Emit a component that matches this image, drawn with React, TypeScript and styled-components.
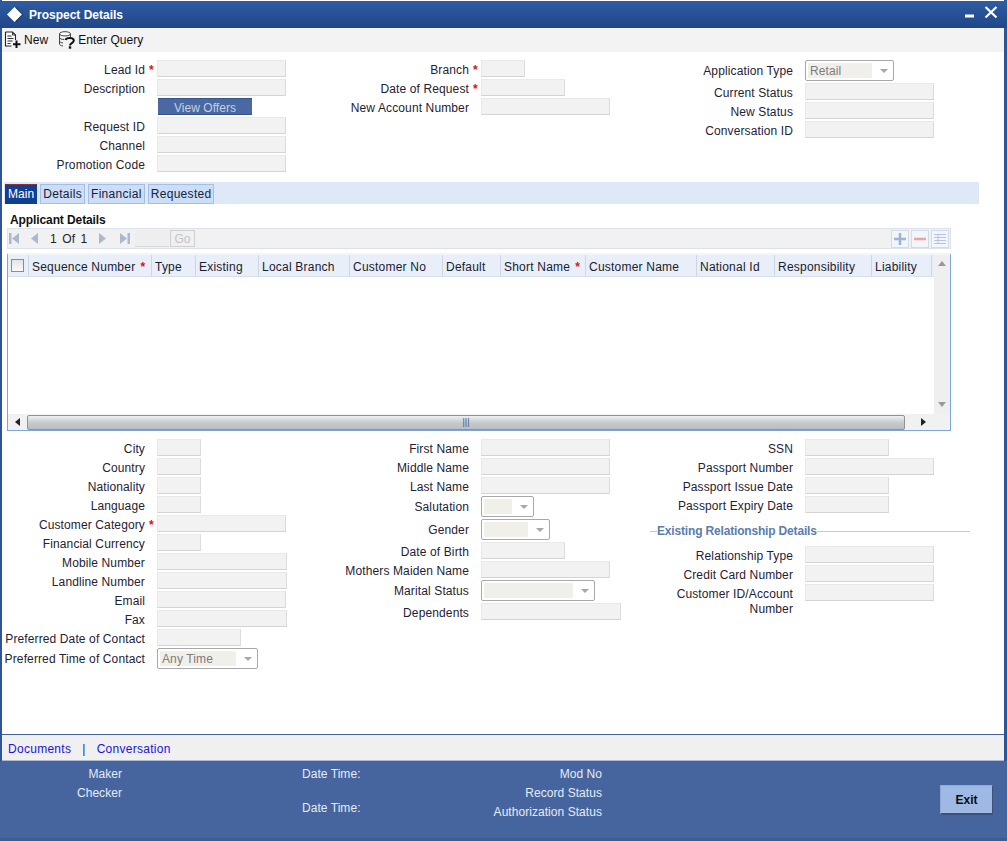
import styled, { createGlobalStyle } from "styled-components";

const Global = createGlobalStyle`
html, body {
    margin:0;
    padding:0;
    background:#fff;
}
body {
    font-family:"Liberation Sans", Arial, sans-serif;
    font-size:12px;
    letter-spacing:0.12px;
    color:#1f2233;
}
`

const Shell = styled.div`
width:1007px;
height:841px;
box-sizing:border-box;
display:flex;
flex-direction:column;
border-left:2px solid #2f5597;
border-right:3px solid #2f5597;
`

const TitleBar = styled.div`
height:27px;
flex:none;
margin:1px -3px 0 -2px;
padding:0 9px 0 7px;
display:flex;
align-items:center;
gap:6px;
color:#fff;
font-weight:bold;
letter-spacing:0;
background:linear-gradient(#2f5ca3, #1f4688);
`

const TitleText = styled.span`
flex:1;
`

const Toolbar = styled.div`
height:24px;
flex:none;
display:flex;
align-items:center;
padding-left:2px;
letter-spacing:0.05px;
background:#f3f3f3;
`

const ToolButton = styled.span`
display:flex;
align-items:center;
gap:3px;
margin-right:10px;
color:#111;
`

const Body = styled.div`
flex:1;
min-height:0;
display:flex;
flex-direction:column;
background:#fff;
`

const FormGrid = styled.div<{$top:number}>`
display:grid;
grid-template-columns:324px 324px 1fr;
padding-top:${(p) => p.$top}px;
`

const Column = styled.div`
display:flex;
flex-direction:column;
`

const Row = styled.div<{$tall?:boolean}>`
display:flex;
align-items:flex-start;
min-height:${(p) => (p.$tall ? 23 : 19)}px;
`

const Label = styled.div<{$tall?:boolean}>`
width:143px;
height:${(p) => (p.$tall ? 23 : 19)}px;
flex:none;
text-align:right;
line-height:${(p) => (p.$tall ? 23 : 21)}px;
white-space:nowrap;
`

const WrapLabel = styled(Label)`
height:auto;
white-space:normal;
line-height:15px;
padding-top:3px;
`

const StarSlot = styled.div`
width:12px;
height:19px;
flex:none;
padding-left:4px;
box-sizing:border-box;
line-height:21px;
color:#e01010;
font-weight:bold;
`

const Field = styled.div<{$w:number}>`
width:${(p) => p.$w}px;
height:17px;
box-sizing:border-box;
background:#f2f2f2;
border:1px solid #e9e9e9;
border-right-color:#dcdcdc;
border-bottom-color:#d4d4d4;
`

const SelectBox = styled.div<{$w:number}>`
width:${(p) => p.$w}px;
height:21px;
box-sizing:border-box;
display:flex;
align-items:center;
padding:0 5px 0 2px;
background:#fff;
border:1px solid #a9a9a9;
border-radius:2px;
`

const SelectValue = styled.div`
flex:1;
height:15px;
margin-right:8px;
padding-left:2px;
line-height:16px;
color:#7c7c7c;
background:#f1efea;
`

const Caret = styled.span`
width:0;
height:0;
border-left:4px solid transparent;
border-right:4px solid transparent;
border-top:4px solid #a8a8a8;
`

const OfferButton = styled.button`
display:block;
width:94px;
height:17px;
margin-left:1px;
padding:4px 0 0;
border:none;
border-top:1px solid #36558f;
border-bottom:1px solid #36558f;
background:#4a69a3;
color:#c6d0e0;
font:12px "Liberation Sans", Arial, sans-serif;
line-height:11px;
letter-spacing:0.05px;
`

const TabStrip = styled.div`
height:22px;
width:975px;
margin:8px 0 0 2px;
padding:2px 0 0 1px;
box-sizing:border-box;
display:flex;
gap:3px;
background:#dfe8f6;
`

const Tab = styled.div<{$active?:boolean}>`
padding:0 2px;
line-height:18px;
height:20px;
box-sizing:border-box;
letter-spacing:${(p) => (p.$active ? 0.05 : 0.3)}px;
border:1px solid ${(p) => (p.$active ? "#0f3f93" : "#a3c0e4")};
border-top-color:${(p) => (p.$active ? "#8a2f3a" : "#a3c0e4")};
background:${(p) => (p.$active ? "#0f3f93" : "#cbdef6")};
color:${(p) => (p.$active ? "#fff" : "#16213f")};
`

const SectionTitle = styled.div`
margin:9px 0 0 8px;
height:15px;
line-height:15px;
font-weight:bold;
letter-spacing:-0.1px;
color:#111;
`

const Pager = styled.div`
width:944px;
height:21px;
margin-left:5px;
box-sizing:border-box;
flex:none;
display:flex;
align-items:center;
padding:0 1px 0 1px;
background:#f1f1f1;
border:1px solid #dbe2ec;
`

const PagerIcon = styled.svg<{$gap:number}>`
display:block;
flex:none;
margin-right:${(p) => p.$gap}px;
`

const PagerText = styled.span`
width:38px;
margin:0 9px 0 10px;
padding-top:1px;
white-space:nowrap;
word-spacing:2px;
color:#222;
`

const PagerInput = styled.div`
width:34px;
height:16px;
margin:0 1px 0 5px;
background:#eeeeee;
border-bottom:1px solid #d6d6d6;
`

const GoButton = styled.div`
width:25px;
height:17px;
margin-right:auto;
box-sizing:border-box;
text-align:center;
line-height:16px;
color:#c4c4c4;
border:1px solid #cfcfcf;
background:#f0f0f0;
`

const SquareButton = styled.div`
width:18px;
height:18px;
margin-left:2px;
box-sizing:border-box;
display:flex;
align-items:center;
justify-content:center;
background:#f2f5fa;
border:1px solid #d3dbe8;
`

const TablePanel = styled.div`
width:944px;
height:178px;
margin:4px 0 0 5px;
box-sizing:border-box;
flex:none;
display:grid;
grid-template-columns:1fr 16px;
grid-template-rows:1fr 16px;
border:1px solid #7da6dc;
border-top:2px solid #f2f5fa;
`

const TableArea = styled.div`
overflow:hidden;
background:#fff;
`

const HeadRow = styled.div`
display:flex;
height:22px;
background:#e8eff9;
border-bottom:1px solid #d6e0ee;
box-sizing:border-box;
`

const HeadCell = styled.div<{$w:number}>`
width:${(p) => p.$w}px;
flex:none;
box-sizing:border-box;
padding-left:3px;
line-height:24px;
white-space:nowrap;
letter-spacing:0.22px;
border-right:1px solid #ccd7e6;
color:#1b1b2e;
`

const CheckCell = styled(HeadCell)`
padding-left:3px;
display:flex;
align-items:center;
`

const CheckBox = styled.span`
width:13px;
height:13px;
box-sizing:border-box;
background:linear-gradient(#e4e4e4, #fafafa);
border:1px solid #8d8d8d;
`

const Star = styled.span`
color:#e01010;
font-weight:bold;
margin-left:5px;
`

const VScroll = styled.div`
display:flex;
flex-direction:column;
justify-content:space-between;
align-items:center;
padding:6px 0 7px;
background:#efefef;
`

const HScroll = styled.div`
display:flex;
align-items:center;
background:#f1f1f1;
`

const ScrollEnd = styled.div<{$w:number, $pad?:number}>`
width:${(p) => p.$w}px;
flex:none;
box-sizing:border-box;
padding-left:${(p) => p.$pad || 0}px;
display:flex;
justify-content:center;
`

const ScrollThumb = styled.div`
flex:1;
height:15px;
box-sizing:border-box;
display:flex;
align-items:center;
justify-content:center;
border:1px solid #8f9396;
border-radius:2px;
background:linear-gradient(#eef0f1, #c3c8cb 55%, #b9bec1);
`

const Grip = styled.span`
font-size:9px;
line-height:9px;
letter-spacing:0;
color:#555;
`

const Corner = styled.div`
background:#f1f1f1;
`

const GroupHead = styled.div`
display:flex;
align-items:center;
width:320px;
height:31px;
padding-top:1px;
box-sizing:border-box;
`

const GroupLine = styled.span`
flex:1;
height:1px;
background:#b9cde6;
`

const GroupStub = styled(GroupLine)`
flex:none;
width:7px;
`

const GroupText = styled.span`
font-weight:bold;
letter-spacing:-0.17px;
color:#5b7cae;
`

const LinkBar = styled.div`
height:27px;
flex:none;
box-sizing:border-box;
display:flex;
align-items:center;
padding:3px 0 0 6px;
letter-spacing:0.28px;
background:#f0f0f0;
border-top:1px solid #44639f;
border-bottom:1px solid #a9b9d6;
`

const DocLink = styled.a`
color:#1a12e6;
text-decoration:none;
`

const LinkSep = styled.span`
color:#1a12e6;
margin:0 11px;
`

const Footer = styled.div`
flex:none;
height:80px;
margin:0 -3px 0 -2px;
padding:4px 14px 0 2px;
box-sizing:border-box;
display:flex;
letter-spacing:0.05px;
background:#46659f;
border-bottom:3px solid #3d5b97;
color:#e6ebf4;
`

const AuditCol = styled.div<{$w:number, $left:number, $right?:boolean}>`
width:${(p) => p.$w}px;
margin-left:${(p) => p.$left}px;
text-align:${(p) => (p.$right ? "right" : "left")};
line-height:19px;
`

const AuditGap = styled.div`
height:15px;
`

const ExitButton = styled.button`
width:53px;
height:30px;
margin:20px 0 0 auto;
padding:0;
background:#9db9e4;
border:1px solid #8fa9d3;
border-right-color:#3c5079;
border-bottom:2px solid #3c5079;
color:#0c0c14;
font:bold 12px "Liberation Sans", Arial, sans-serif;
`

interface IRow {
    label: string;
    width?: number;
    star?: boolean;
    select?: string;
    button?: string;
    wrap?: boolean;
}

const topCols: IRow[][] = [
    [
        { label: "Lead Id", width: 129, star: true },
        { label: "Description", width: 129 },
        { label: "", button: "View Offers" },
        { label: "Request ID", width: 129 },
        { label: "Channel", width: 129 },
        { label: "Promotion Code", width: 129 },
    ],
    [
        { label: "Branch", width: 44, star: true },
        { label: "Date of Request", width: 84, star: true },
        { label: "New Account Number", width: 129 },
    ],
    [
        { label: "Application Type", width: 89, select: "Retail" },
        { label: "Current Status", width: 129 },
        { label: "New Status", width: 129 },
        { label: "Conversation ID", width: 129 },
    ],
];

const leftCol: IRow[] = [
    { label: "City", width: 44 },
    { label: "Country", width: 44 },
    { label: "Nationality", width: 44 },
    { label: "Language", width: 44 },
    { label: "Customer Category", width: 129, star: true },
    { label: "Financial Currency", width: 44 },
    { label: "Mobile Number", width: 130 },
    { label: "Landline Number", width: 130 },
    { label: "Email", width: 129 },
    { label: "Fax", width: 130 },
    { label: "Preferred Date of Contact", width: 84 },
    { label: "Preferred Time of Contact", width: 101, select: "Any Time" },
];

const midCol: IRow[] = [
    { label: "First Name", width: 129 },
    { label: "Middle Name", width: 129 },
    { label: "Last Name", width: 129 },
    { label: "Salutation", width: 53, select: "" },
    { label: "Gender", width: 69, select: "" },
    { label: "Date of Birth", width: 84 },
    { label: "Mothers Maiden Name", width: 129 },
    { label: "Marital Status", width: 114, select: "" },
    { label: "Dependents", width: 140 },
];

const rightCol: IRow[] = [
    { label: "SSN", width: 84 },
    { label: "Passport Number", width: 129 },
    { label: "Passport Issue Date", width: 84 },
    { label: "Passport Expiry Date", width: 84 },
];

const relationCol: IRow[] = [
    { label: "Relationship Type", width: 129 },
    { label: "Credit Card Number", width: 129 },
    { label: "Customer ID/Account Number", width: 129, wrap: true },
];

const headers = [
    { name: "Sequence Number", w: 123, star: true },
    { name: "Type", w: 44 },
    { name: "Existing", w: 63 },
    { name: "Local Branch", w: 91 },
    { name: "Customer No", w: 93 },
    { name: "Default", w: 58 },
    { name: "Short Name", w: 85, star: true },
    { name: "Customer Name", w: 111 },
    { name: "National Id", w: 78 },
    { name: "Responsibility", w: 97 },
    { name: "Liability", w: 60 },
];

function FormRow({ row }: { row: IRow }) {
    const isSelect = row.select !== undefined;
    if (row.button) {
        return (
            <Row>
                <Label />
                <StarSlot />
                <OfferButton>{row.button}</OfferButton>
            </Row>
        );
    }
    return (
        <Row $tall={isSelect}>
            {row.wrap ? <WrapLabel>{row.label}</WrapLabel> : <Label $tall={isSelect}>{row.label}</Label>}
            <StarSlot>{row.star ? "*" : ""}</StarSlot>
            {isSelect ? (
                <SelectBox $w={row.width || 0}>
                    <SelectValue>{row.select}</SelectValue>
                    <Caret />
                </SelectBox>
            ) : (
                <Field $w={row.width || 0} />
            )}
        </Row>
    );
}

const pagerFill = "#a9bace";

function PagerArrow({ dir, bar, gap }: { dir: "l" | "r"; bar?: boolean; gap: number }) {
    const tri = dir === "l" ? "10,1 10,12 3,6.5" : "2,1 2,12 9,6.5";
    const line = dir === "l" ? "M0 1h2.5v11H0z" : "M9.5 1H12v11H9.5z";
    return (
        <PagerIcon $gap={gap} width="12" height="13" viewBox="0 0 12 13">
            <polygon points={tri} fill={pagerFill} />
            {bar && <path d={line} fill={pagerFill} />}
        </PagerIcon>
    );
}

function NewIcon() {
    return (
        <svg width="17" height="18" viewBox="0 0 17 18">
            <path d="M1.5 1h7l3 3v5M1.5 1v14h6" fill="#fff" stroke="#222" strokeWidth="1.1" />
            <path d="M8.5 1v3h3M3.5 5h4M3.5 7.5h6M3.5 10h5M3.5 12.5h3" fill="none" stroke="#333" />
            <path d="M12.5 9.5v7.500M9 13.250h7.500" stroke="#111" strokeWidth="2" />
        </svg>
    );
}

function QueryIcon() {
    return (
        <svg width="17" height="18" viewBox="0 0 17 18">
            <ellipse cx="7" cy="2.8" rx="5.5" ry="2.1" fill="#fff" stroke="#444" />
            <path d="M1.500 3v10c0 1 1.500 1.800 3.500 2M12.500 3v3M1.500 6.500c0 1 2 2 4.500 2M1.500 10c0 1 1.500 1.800 3.500 2" fill="none" stroke="#444" />
            <path d="M7.500 9c.8-2.500 7.700-2.800 8.300.3.400 2.700-3.800 2.900-3.800 5.200" fill="none" stroke="#111" strokeWidth="2" />
            <path d="M10.800 15.300h2.400v2.400h-2.400z" fill="#111" />
        </svg>
    );
}

function App() {
    return (
        <Shell>
            <Global />
            <TitleBar>
                <svg width="16" height="15" viewBox="0 0 16 15">
                    <path d="M9 0l7 7.500-7 7.500z" fill="#14305f" />
                    <path d="M7.500 0l7.500 7.500-7.500 7.500L0 7.500z" fill="#fff" />
                </svg>
                <TitleText>Prospect Details</TitleText>
                <svg width="33" height="18" viewBox="0 0 33 18">
                    <path d="M0 8.500h9v3H0z" fill="#fff" />
                    <path d="M20.500 1l11 10.500M31.500 1l-11 10.500" stroke="#fff" strokeWidth="2.2" />
                </svg>
            </TitleBar>
            <Toolbar>
                <ToolButton><NewIcon />New</ToolButton>
                <ToolButton><QueryIcon />Enter Query</ToolButton>
            </Toolbar>
            <Body>
                <FormGrid $top={8}>
                    {topCols.map((col, i) => (
                        <Column key={i}>
                            {col.map((row) => <FormRow key={row.label + i} row={row} />)}
                        </Column>
                    ))}
                </FormGrid>
                <TabStrip>
                    <Tab $active>Main</Tab>
                    <Tab>Details</Tab>
                    <Tab>Financial</Tab>
                    <Tab>Requested</Tab>
                </TabStrip>
                <SectionTitle>Applicant Details</SectionTitle>
                <Pager>
                    <PagerArrow dir="l" bar gap={7} />
                    <PagerArrow dir="l" gap={0} />
                    <PagerText>1 Of 1</PagerText>
                    <PagerArrow dir="r" gap={9} />
                    <PagerArrow dir="r" bar gap={0} />
                    <PagerInput />
                    <GoButton>Go</GoButton>
                    <SquareButton>
                        <svg width="14" height="14" viewBox="0 0 14 14">
                            <path d="M7 1v12M1 7h12" stroke="#9db3d4" strokeWidth="2.5" />
                        </svg>
                    </SquareButton>
                    <SquareButton>
                        <svg width="14" height="14" viewBox="0 0 14 14">
                            <path d="M1 7h12" stroke="#eba3a3" strokeWidth="2.5" />
                        </svg>
                    </SquareButton>
                    <SquareButton>
                        <svg width="14" height="14" viewBox="0 0 14 14">
                            <path d="M1 2.5h12M1 5.5h12M1 8.5h12M1 11.5h12M5 2v10" stroke="#b5c6de" />
                        </svg>
                    </SquareButton>
                </Pager>
                <TablePanel>
                    <TableArea>
                        <HeadRow>
                            <CheckCell $w={21}><CheckBox /></CheckCell>
                            {headers.map((h) => (
                                <HeadCell key={h.name} $w={h.w}>
                                    {h.name}
                                    {h.star && <Star>*</Star>}
                                </HeadCell>
                            ))}
                        </HeadRow>
                    </TableArea>
                    <VScroll>
                        <svg width="8" height="5" viewBox="0 0 8 5"><path d="M4 0l4 5H0z" fill="#999" /></svg>
                        <svg width="8" height="5" viewBox="0 0 8 5"><path d="M0 0h8L4 5z" fill="#999" /></svg>
                    </VScroll>
                    <HScroll>
                        <ScrollEnd $w={19}>
                            <svg width="5" height="8" viewBox="0 0 5 8"><path d="M5 0v8L0 4z" fill="#222" /></svg>
                        </ScrollEnd>
                        <ScrollThumb><Grip>|||</Grip></ScrollThumb>
                        <ScrollEnd $w={29} $pad={7}>
                            <svg width="5" height="8" viewBox="0 0 5 8"><path d="M0 0v8l5-4z" fill="#222" /></svg>
                        </ScrollEnd>
                    </HScroll>
                    <Corner />
                </TablePanel>
                <FormGrid $top={8}>
                    <Column>
                        {leftCol.map((row) => <FormRow key={row.label} row={row} />)}
                    </Column>
                    <Column>
                        {midCol.map((row) => <FormRow key={row.label} row={row} />)}
                    </Column>
                    <Column>
                        {rightCol.map((row) => <FormRow key={row.label} row={row} />)}
                        <GroupHead>
                            <GroupStub />
                            <GroupText>Existing Relationship Details</GroupText>
                            <GroupLine />
                        </GroupHead>
                        {relationCol.map((row) => <FormRow key={row.label} row={row} />)}
                    </Column>
                </FormGrid>
            </Body>
            <LinkBar>
                <DocLink>Documents</DocLink>
                <LinkSep>|</LinkSep>
                <DocLink>Conversation</DocLink>
            </LinkBar>
            <Footer>
                <AuditCol $w={120} $left={0} $right>
                    <div>Maker</div>
                    <div>Checker</div>
                </AuditCol>
                <AuditCol $w={80} $left={180}>
                    <div>Date Time:</div>
                    <AuditGap />
                    <div>Date Time:</div>
                </AuditCol>
                <AuditCol $w={220} $left={0} $right>
                    <div>Mod No</div>
                    <div>Record Status</div>
                    <div>Authorization Status</div>
                </AuditCol>
                <ExitButton>Exit</ExitButton>
            </Footer>
        </Shell>
    );
}

export default App;
